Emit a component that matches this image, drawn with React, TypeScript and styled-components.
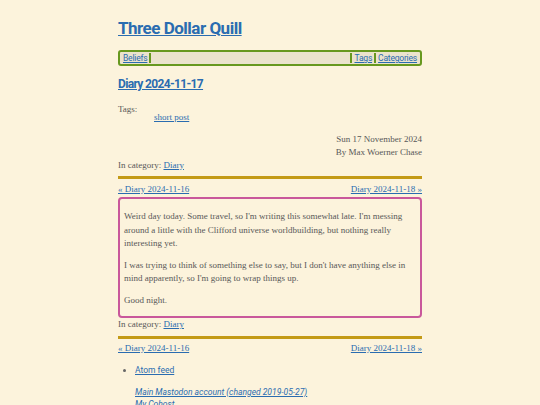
import styled, { createGlobalStyle } from 'styled-components'

const GlobalStyle = createGlobalStyle`
	html, body {
		margin: 0;
		padding: 0;
		background: #fcf3dc;
	}
	body {
		font-family: 'Liberation Serif', serif;
		color: #585858;
		font-size: 9px;
	}
`

const sans = `'Roboto', 'Noto Sans', sans-serif`
const serif = `'Liberation Serif', 'DejaVu Serif', serif`
const linkBlue = '#2a6cb0'

export default function App() {
	return (
		<>
			<GlobalStyle />
			<Page>
				<SiteTitle>
					<a href="#">Three Dollar Quill</a>
				</SiteTitle>
				<NavBar>
					<NavLink href="#">Beliefs</NavLink>
					<NavSep />
					<NavFill />
					<NavSep />
					<NavLink href="#">Tags</NavLink>
					<NavSep />
					<NavLink href="#">Categories</NavLink>
				</NavBar>
				<PostTitle>
					<a href="#">Diary 2024-11-17</a>
				</PostTitle>
				<TagsLabel>Tags:</TagsLabel>
				<TagList>
					<TextLink href="#">short post</TextLink>
				</TagList>
				<Meta>
					<div>Sun 17 November 2024</div>
					<div>By Max Woerner Chase</div>
				</Meta>
				<Category>
					In category: <TextLink href="#">Diary</TextLink>
				</Category>
				<Rule />
				<PrevNext>
					<TextLink href="#">« Diary 2024-11-16</TextLink>
					<TextLink href="#">Diary 2024-11-18 »</TextLink>
				</PrevNext>
				<PostBody>
					<p>
						Weird day today. Some travel, so I'm writing this somewhat late. I'm messing
						around a little with the Clifford universe worldbuilding, but nothing really
						interesting yet.
					</p>
					<p>
						I was trying to think of something else to say, but I don't have anything else in
						mind apparently, so I'm going to wrap things up.
					</p>
					<p>Good night.</p>
				</PostBody>
				<Category>
					In category: <TextLink href="#">Diary</TextLink>
				</Category>
				<Rule />
				<PrevNext>
					<TextLink href="#">« Diary 2024-11-16</TextLink>
					<TextLink href="#">Diary 2024-11-18 »</TextLink>
				</PrevNext>
				<Feeds>
					<li>
						<SansLink href="#">Atom feed</SansLink>
					</li>
				</Feeds>
				<Accounts>
					<SansLink href="#">Main Mastodon account (changed 2019-05-27)</SansLink>
					<SansLink href="#">My Cohost</SansLink>
				</Accounts>
			</Page>
		</>
	)
}

const Page = styled.div`
	width: 304px;
	margin: 0 auto;
	padding-top: 17px;
`
const SiteTitle = styled.h1`
	margin: 0 0 11px;
	font-family: ${sans};
	font-size: 17px;
	font-weight: 700;
	letter-spacing: -0.5px;
	line-height: 22px;

	a {
		color: ${linkBlue};
	}
`
const NavBar = styled.nav`
	display: flex;
	align-items: stretch;
	height: 12px;
	border: 2px solid #67981f;
	border-radius: 3px;
	background: #ebe3cd;
	padding: 0 1px;
`
const NavLink = styled.a`
	font-family: ${sans};
	font-size: 8.5px;
	letter-spacing: -0.2px;
	line-height: 12px;
	color: ${linkBlue};
	padding: 0 2px;
`
const NavSep = styled.span`
	width: 2px;
	background: #67981f;
	margin: 1px 0;
`
const NavFill = styled.span`
	flex: 1;
`
const PostTitle = styled.h2`
	margin: 10px 0 13px;
	font-family: ${sans};
	font-size: 12px;
	font-weight: 700;
	letter-spacing: -0.65px;
	line-height: 16px;

	a {
		color: ${linkBlue};
	}
`
const TagsLabel = styled.div`
	line-height: 8px;
`
const TagList = styled.div`
	padding-left: 36px;
	line-height: 8px;
	margin-bottom: 11.5px;
`
const TextLink = styled.a`
	font-family: ${serif};
	color: ${linkBlue};
`
const Meta = styled.div`
	text-align: right;
	line-height: 13px;
`
const Category = styled.div`
	line-height: 13px;
`
const Rule = styled.hr`
	margin: 4.5px 0;
	border: 0;
	height: 3px;
	background: #c39a16;
`
const PrevNext = styled.div`
	display: flex;
	justify-content: space-between;
	line-height: 11px;
	margin-bottom: 2.5px;
`
const PostBody = styled.div`
	border: 2px solid #c9579b;
	border-radius: 4px;
	padding: 3px 4px 1px;
	line-height: 13.5px;

	p {
		margin: 8px 0;
	}
`
const Feeds = styled.ul`
	margin: 9.5px 0 0;
	padding-left: 17px;
	line-height: 13px;
	font-size: 8.5px;

	li::marker {
		color: #666;
	}
`
const SansLink = styled.a`
	font-family: ${sans};
	color: ${linkBlue};
`
const Accounts = styled.div`
	display: flex;
	flex-direction: column;
	align-items: flex-start;
	padding-left: 17px;
	margin-top: 9px;
	line-height: 12px;
	font-size: 8.5px;
	font-style: italic;
`
